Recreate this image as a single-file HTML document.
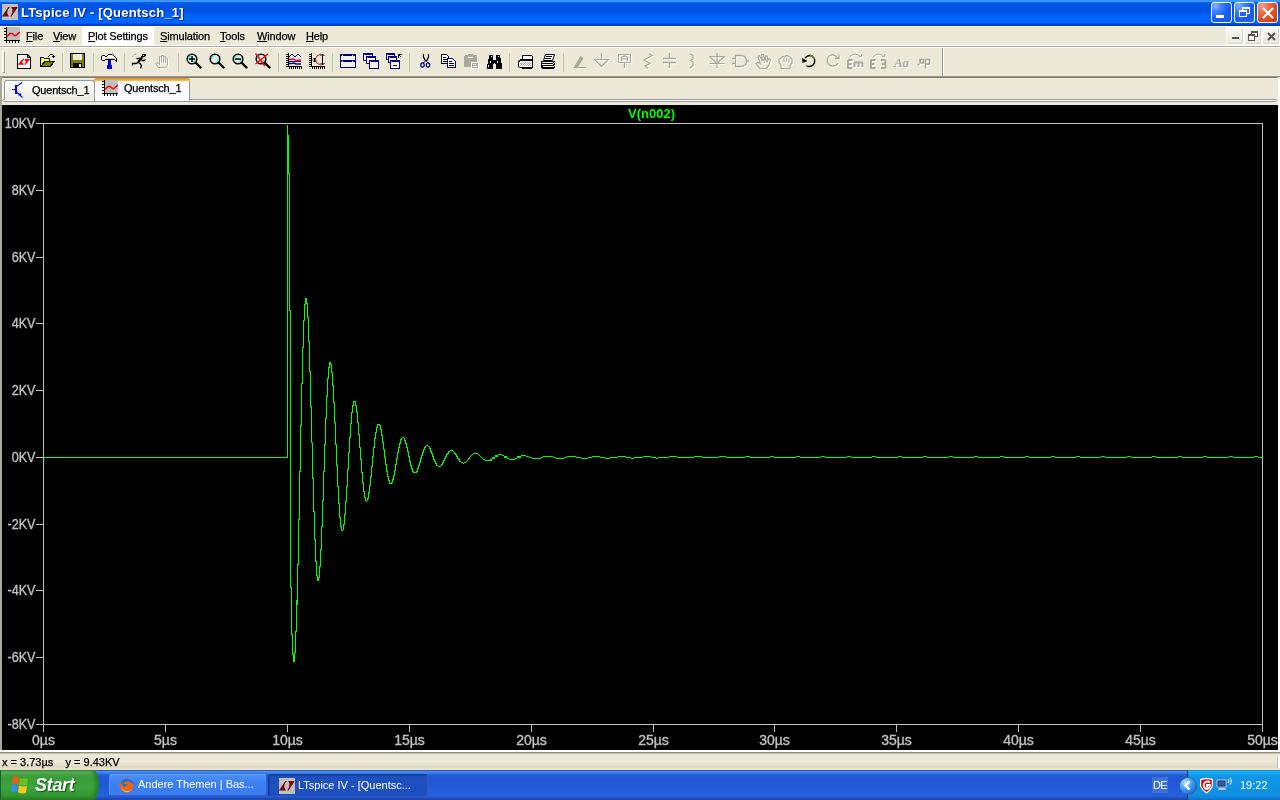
<!DOCTYPE html>
<html><head><meta charset="utf-8">
<style>
*{margin:0;padding:0;box-sizing:border-box}
html,body{width:1280px;height:800px;overflow:hidden;-webkit-font-smoothing:antialiased;background:#ece9d8;font-family:"Liberation Sans",sans-serif;font-size:11px;color:#000}
.abs{position:absolute}
#title,#menubar,#tabbar,#status,#taskbar{will-change:transform}
#menubar,#tabbar,#status{-webkit-text-stroke:0.25px #000}
#title{left:0;top:0;width:1280px;height:26px;background:linear-gradient(#3d95ff 0,#3d95ff 2px,#0a6af8 2px,#005ce6 3px,#0054e3 5px,#0055e5 12px,#005ef0 14px,#0066ff 17px,#0066ff 23px,#0040d0 24px,#0040d0 26px)}
#title .t{left:21px;top:5px;color:#fff;font-weight:bold;font-size:13px;letter-spacing:0.2px;text-shadow:1px 1px 0 #0a1e8c}
#menubar{left:0;top:26px;width:1280px;height:20px;background:#ece9d8;border-top:1px solid #fff8e0;box-shadow:inset 0 -1px 0 #fff}
.mi{position:absolute;top:3px;font-size:11px;letter-spacing:-0.15px}
.mi u{text-decoration:underline;text-underline-offset:1px;text-decoration-thickness:1px}
#toolbar{left:0;top:46px;width:1280px;height:31px;background:#ece9d8;border-top:1px solid #aca899;box-shadow:inset 0 1px 0 #fff}
#tabbar{left:0;top:77px;width:1280px;height:28px;background:#ece9d8}
#plot{left:2px;top:105px;width:1276px;height:645px;background:#000}
#status{left:0;top:750px;width:1280px;height:20px;background:linear-gradient(#fff 0,#fff 2px,#8e8b7c 2px,#8e8b7c 3px,#c8c4b4 3px,#c8c4b4 4px,#ece9d8 4px,#ece9d8 12px,#dcd8c4 17px,#e8e2c8 18px,#ece6cc 20px)}
#taskbar{left:0;top:770px;width:1280px;height:30px;background:linear-gradient(#2a5ad0 0,#2a5ad0 1px,#3c84e4 1px,#4a92e6 2px,#3a80e0 3px,#2a6ad8 4px,#2258d4 6px,#2056d4 10px,#245fdc 26px,#1e48b0 29px,#1e48b0 30px)}
.mdib{top:1px;width:16px;height:16px;background:linear-gradient(#f6f5f0,#ebe9e0);border-right:1px solid #d8d4c6;border-bottom:1px solid #d8d4c6}
.cb{position:absolute;top:2px;width:21px;height:21px;border:1px solid #fff;border-radius:3px;background:radial-gradient(circle at 20% 15%,#8cb4ff 0,#3c82ff 25%,#1a5bf0 60%,#2160ea 100%)}
.cb.x{background:radial-gradient(circle at 20% 15%,#f0a090 0,#e6704a 30%,#d8491c 70%,#c63c10 100%)}
</style></head><body>
<div id="title" class="abs">
 <svg class="abs" style="left:2px;top:4px" width="16" height="16" viewBox="0 0 16 16"><rect width="16" height="16" fill="#c0c0c0"/><path d="M0 12.5L6.3 3H7.9L5.6 6L5.2 9.3L6.9 12.5Z" fill="#800000"/><path d="M9.1 3H15.8L9.5 12.5H8.2L10.3 8.8L10.4 5.2Z" fill="#800000"/></svg>
 <div class="abs t">LTspice IV - [Quentsch_1]</div>
 <div class="cb" style="left:1211px"><div class="abs" style="left:4px;top:12px;width:8px;height:3px;background:#fff"></div></div>
 <div class="cb" style="left:1234px"><div class="abs" style="left:7px;top:4px;width:8px;height:7px;border:1px solid #fff;border-top-width:2px"></div><div class="abs" style="left:4px;top:7px;width:8px;height:7px;border:1px solid #fff;border-top-width:2px;background:#2563f0"></div></div>
 <div class="cb x" style="left:1257px"><svg class="abs" style="left:4px;top:4px" width="12" height="12" viewBox="0 0 12 12"><path d="M1 1L11 11M11 1L1 11" stroke="#fff" stroke-width="2"/></svg></div>
</div>
<div id="menubar" class="abs">
 <svg class="abs" style="left:4px;top:0px" width="17" height="17" viewBox="0 0 17 17" shape-rendering="crispEdges"><rect x="3" y="0" width="13" height="13" fill="#c0c0c0"/><rect x="2" y="0" width="1" height="16" fill="#000"/><rect x="0" y="13" width="16" height="1" fill="#000"/><path d="M0 1h2v1h-2zM0 4h2v1h-2zM0 7h2v1h-2zM0 10h2v1h-2zM2 14h1v2h-1zM5 14h1v2h-1zM8 14h1v2h-1zM11 14h1v2h-1zM14 14h1v2h-1z" fill="#000"/><path d="M3 9.5L6 6.5H8L10.5 8.5H12L15.8 5" stroke="#f00" stroke-width="1.6" fill="none" shape-rendering="auto"/></svg>
 <div class="abs" style="left:1226px;top:0;width:54px;height:19px;background:#fff"></div>
 <div class="abs mdib" style="left:1227px"><div class="abs" style="left:5px;top:9px;width:7px;height:2px;background:#555"></div></div>
 <div class="abs mdib" style="left:1245px"><div class="abs" style="left:6px;top:3px;width:7px;height:6px;border:1px solid #555;border-top-width:2px"></div><div class="abs" style="left:3px;top:6px;width:7px;height:7px;border:1px solid #555;border-top-width:2px;background:#f2f1ea"></div></div>
 <div class="abs mdib" style="left:1263px"><svg class="abs" style="left:4px;top:4px" width="9" height="9" viewBox="0 0 9 9"><path d="M1 1L8 8M8 1L1 8" stroke="#555" stroke-width="2"/></svg></div>
 <div class="mi" style="left:26px"><u>F</u>ile</div>
 <div class="mi" style="left:53px"><u>V</u>iew</div>
 <div class="abs" style="left:82px;top:-1px;width:72px;height:19px;background:#fff"></div>
 <div class="mi" style="left:88px"><u>P</u>lot Settings</div>
 <div class="mi" style="left:160px"><u>S</u>imulation</div>
 <div class="mi" style="left:220px"><u>T</u>ools</div>
 <div class="mi" style="left:257px"><u>W</u>indow</div>
 <div class="mi" style="left:306px"><u>H</u>elp</div>
</div>
<div id="toolbar" class="abs"></div>
<div class="abs" style="left:2px;top:51px;width:3px;height:22px;border:1px solid #fff;border-right-color:#aca899;border-bottom-color:#aca899;background:#ece9d8"></div><div class="abs" style="left:62px;top:53px;width:1px;height:19px;background:#c5c2b2"></div><div class="abs" style="left:93px;top:53px;width:1px;height:19px;background:#c5c2b2"></div><div class="abs" style="left:124px;top:53px;width:1px;height:19px;background:#c5c2b2"></div><div class="abs" style="left:178px;top:53px;width:1px;height:19px;background:#c5c2b2"></div><div class="abs" style="left:278px;top:53px;width:1px;height:19px;background:#c5c2b2"></div><div class="abs" style="left:332px;top:53px;width:1px;height:19px;background:#c5c2b2"></div><div class="abs" style="left:409px;top:53px;width:1px;height:19px;background:#c5c2b2"></div><div class="abs" style="left:509px;top:53px;width:1px;height:19px;background:#c5c2b2"></div><div class="abs" style="left:563px;top:53px;width:1px;height:19px;background:#c5c2b2"></div><div class="abs" style="left:942px;top:48px;width:2px;height:28px;border-left:1px solid #9d9a8a;border-right:1px solid #fff"></div><div class="abs" style="left:0;top:76px;width:1280px;height:1px;background:#9d9a8a"></div><svg class="abs" style="left:16px;top:53px" width="16" height="16" viewBox="0 0 16 16" ><path d="M1.5 1.5H11.5L14.5 4.5V15.5H1.5Z" fill="#fff" stroke="#000" stroke-width="1.1"/><path d="M11.5 1.5V4.5H14.5" fill="none" stroke="#000"/><path d="M2 11.8L4.2 8.5L5.5 7L7 6H14.3L12.3 8.2L11.2 9.8L9.4 11.8Z" fill="#f00"/><ellipse cx="8" cy="8.9" rx="1.7" ry="1.7" fill="#fff"/><rect x="7.6" y="10.4" width="0.9" height="1.4" fill="#fff"/><rect x="8.2" y="6" width="0.8" height="1.2" fill="#fff"/></svg><svg class="abs" style="left:39px;top:53px" width="16" height="16" viewBox="0 0 16 16" ><g shape-rendering="crispEdges"><path d="M1 4h4v1h6v3h-6l-3 6h-1z" fill="#000"/><rect x="2" y="5" width="3" height="8" fill="#ff0"/><rect x="5" y="6" width="5" height="2" fill="#ff0"/><path d="M3 6h1v1h-1zM2 8h1v1h-1zM4 8h1v1h-1zM3 10h1v1h-1zM6 6h1v1h-1zM8 6h1v1h-1zM2 12h1v1h-1z" fill="#fff"/><path d="M5 8h11l-4 6h-11z" fill="#000"/><path d="M6 9h8l-3 4h-8z" fill="#808000"/><path d="M9 3h1v-1h1v-1h3v1h1v1h-1v-1h-3v1h-1v1h-1z" fill="#000"/><path d="M13 3h3v1h-1v1h-1v-1h-1z" fill="#000"/></g></svg><svg class="abs" style="left:70px;top:53px" width="16" height="16" viewBox="0 0 16 16" ><rect x="0.5" y="0.5" width="14" height="14" fill="#808000" stroke="#000"/><rect x="3" y="1" width="9" height="6" fill="#ece9d8"/><rect x="3" y="10" width="9" height="5" fill="#000"/><rect x="9" y="11" width="2" height="3" fill="#ece9d8"/></svg><svg class="abs" style="left:101px;top:53px" width="16" height="16" viewBox="0 0 16 16" shape-rendering="crispEdges"><path d="M0.5 3.5L1.5 2.5H3.5L4.5 3.5H5.5L7.5 1.5H11.5L15.5 5.5V8.5L13.5 6.5H4.5L3.5 7.5H1.5L0.5 6.5Z" fill="#fff" stroke="#000"/><rect x="5" y="5" width="8" height="1" fill="#c8c4b0"/><rect x="7" y="7" width="3" height="5" fill="#0000ff"/><rect x="7" y="7" width="1" height="5" fill="#0000a0"/><rect x="6" y="12" width="5" height="4" fill="#0000ff"/><rect x="6" y="12" width="2" height="4" fill="#0000a0"/></svg><svg class="abs" style="left:131px;top:53px" width="16" height="16" viewBox="0 0 16 16" ><path d="M11 1h4v2h-1v1h-3z" fill="#000"/><rect x="12" y="2" width="1" height="1" fill="#fff"/><path d="M11.5 3.5L6.8 9.8" stroke="#000" stroke-width="2.2" fill="none"/><path d="M5.5 5.5H8.5L10 7M10.5 7.5H13L14.5 6.5M7 9.5L5 10.5H1.5V12.5M8.5 10L10.5 12.5L9.5 15.5" stroke="#000" stroke-width="1.3" fill="none"/><path d="M1 3.5L3 3M3 1.5L5.5 1" stroke="#b0ac98"/></svg><svg class="abs" style="left:154px;top:53px" width="16" height="16" viewBox="0 0 16 16" ><g transform="translate(1,1)" stroke="#fff" fill="none"><path d="M4.5 14.5L1.5 10.5L3 9.5L5.5 11.5V3.5H7.5V9.5V2.5H9.5V9.5V3.5H11.5V9.5V5.5H13.5V12.5L11.5 14.5Z"/></g><g stroke="#aca899" fill="none"><path d="M4.5 14.5L1.5 10.5L3 9.5L5.5 11.5V3.5H7.5V9.5V2.5H9.5V9.5V3.5H11.5V9.5V5.5H13.5V12.5L11.5 14.5Z"/></g></svg><svg class="abs" style="left:186px;top:53px" width="16" height="16" viewBox="0 0 16 16" ><circle cx="6" cy="6" r="4.8" fill="none" stroke="#000" stroke-width="1.5"/><path d="M2.8 6Q2.8 3.2 5 2.8" stroke="#0ff" fill="none" stroke-width="1.1"/><path d="M9.2 6Q9.2 8.6 7 9.2" stroke="#0ff" fill="none" stroke-width="1.1"/><path d="M10 10L14.5 14.5" stroke="#000" stroke-width="2.4" stroke-linecap="round"/><path d="M5.3 3h1.5v6h-1.5zM3 5.3h6v1.5h-6z" fill="#000"/></svg><svg class="abs" style="left:209px;top:53px" width="16" height="16" viewBox="0 0 16 16" ><circle cx="6" cy="6" r="4.8" fill="none" stroke="#000" stroke-width="1.5"/><path d="M2.8 6Q2.8 3.2 5 2.8" stroke="#0ff" fill="none" stroke-width="1.1"/><path d="M9.2 6Q9.2 8.6 7 9.2" stroke="#0ff" fill="none" stroke-width="1.1"/><path d="M10 10L14.5 14.5" stroke="#000" stroke-width="2.4" stroke-linecap="round"/></svg><svg class="abs" style="left:232px;top:53px" width="16" height="16" viewBox="0 0 16 16" ><circle cx="6" cy="6" r="4.8" fill="none" stroke="#000" stroke-width="1.5"/><path d="M2.8 6Q2.8 3.2 5 2.8" stroke="#0ff" fill="none" stroke-width="1.1"/><path d="M9.2 6Q9.2 8.6 7 9.2" stroke="#0ff" fill="none" stroke-width="1.1"/><path d="M10 10L14.5 14.5" stroke="#000" stroke-width="2.4" stroke-linecap="round"/><path d="M3 5.3h6v1.5h-6z" fill="#000"/></svg><svg class="abs" style="left:255px;top:53px" width="16" height="16" viewBox="0 0 16 16" ><circle cx="6" cy="6" r="4.8" fill="none" stroke="#000" stroke-width="1.5"/><path d="M2.8 6Q2.8 3.2 5 2.8" stroke="#0ff" fill="none" stroke-width="1.1"/><path d="M9.2 6Q9.2 8.6 7 9.2" stroke="#0ff" fill="none" stroke-width="1.1"/><path d="M10 10L14.5 14.5" stroke="#000" stroke-width="2.4" stroke-linecap="round"/><path d="M0.5 0.5L10 13M13 1L0.5 11" stroke="#f00" stroke-width="1.4"/></svg><svg class="abs" style="left:286px;top:53px" width="16" height="16" viewBox="0 0 16 16" ><path d="M2 0h1v14h-1zM2 13h14v1h-14zM0 1h2v1h-2zM0 3h2v1h-2zM0 5h2v1h-2zM0 7h2v1h-2zM0 9h2v1h-2zM0 11h2v1h-2zM0 13h2v1h-2zM3 14h1v2h-1zM5 14h1v2h-1zM7 14h1v2h-1zM9 14h1v2h-1zM11 14h1v2h-1zM13 14h1v2h-1zM15 14h1v2h-1z" fill="#000" shape-rendering="crispEdges"/><path d="M3 4L6 1L9 4L12 1L15 4" stroke="#0000a0" fill="none"/><path d="M3 6.5H5L7 6L10 7.5L15 7" stroke="#f00" fill="none" stroke-width="1.3"/><path d="M3 8.5H15" stroke="#0000a0" fill="none"/><path d="M3 10.5H6L8 10L10 11H15" stroke="#0000a0" fill="none" stroke-width="1.5"/></svg><svg class="abs" style="left:309px;top:53px" width="16" height="16" viewBox="0 0 16 16" ><path d="M2 0h1v14h-1zM2 13h14v1h-14zM0 1h2v1h-2zM0 3h2v1h-2zM0 5h2v1h-2zM0 7h2v1h-2zM0 9h2v1h-2zM0 11h2v1h-2zM0 13h2v1h-2zM3 14h1v2h-1zM5 14h1v2h-1zM7 14h1v2h-1zM9 14h1v2h-1zM11 14h1v2h-1zM13 14h1v2h-1zM15 14h1v2h-1z" fill="#000" shape-rendering="crispEdges"/><path d="M12 1Q7 2 6 6.5Q7 11 12 12" stroke="#f00" fill="none"/><path d="M13.5 1V12M11.5 3L13.5 1L15.5 3M11.5 10L13.5 12L15.5 10M5.5 5V9M4 6.5L5.5 5L7 6.5M4 7.5L5.5 9L7 7.5" stroke="#000" fill="none"/></svg><svg class="abs" style="left:340px;top:53px" width="16" height="16" viewBox="0 0 16 16" shape-rendering="crispEdges"><rect x="0.5" y="1.5" width="15" height="13" fill="#f4f2e8" stroke="#000080"/><rect x="1" y="1" width="14" height="2" fill="#000080"/><rect x="1" y="7" width="14" height="2" fill="#000080"/><path d="M2 2h1v1h-1zM12 2h1v1h-1zM2 8h1v1h-1zM12 8h1v1h-1z" fill="#fff"/></svg><svg class="abs" style="left:363px;top:53px" width="16" height="16" viewBox="0 0 16 16" shape-rendering="crispEdges"><rect x="0.5" y="0.5" width="9" height="7" fill="#f4f2e8" stroke="#000080"/><rect x="0" y="0" width="10" height="2" fill="#000080"/><rect x="1" y="1" width="1" height="1" fill="#f0f"/><rect x="3.5" y="3.5" width="9" height="7" fill="#f4f2e8" stroke="#000080"/><rect x="3" y="3" width="10" height="2" fill="#000080"/><rect x="4" y="4" width="1" height="1" fill="#f0f"/><rect x="6.5" y="7.5" width="9" height="8" fill="#f4f2e8" stroke="#000080"/><rect x="6" y="7" width="10" height="2" fill="#000080"/><rect x="7" y="8" width="1" height="1" fill="#f0f"/></svg><svg class="abs" style="left:386px;top:53px" width="16" height="16" viewBox="0 0 16 16" shape-rendering="crispEdges"><rect x="0.5" y="0.5" width="8" height="6" fill="#f4f2e8" stroke="#000080"/><rect x="0" y="0" width="9" height="2" fill="#000080"/><rect x="1" y="1" width="1" height="1" fill="#f0f"/><rect x="2.5" y="3.5" width="8" height="6" fill="#f4f2e8" stroke="#000080"/><rect x="2" y="3" width="9" height="2" fill="#000080"/><rect x="3" y="4" width="1" height="1" fill="#f0f"/><rect x="4.5" y="7.5" width="9" height="8" fill="#f4f2e8" stroke="#000080"/><rect x="4" y="7" width="10" height="2" fill="#000080"/><rect x="5" y="8" width="1" height="1" fill="#f0f"/><rect x="7" y="12" width="4" height="1" fill="#000"/><path d="M12.5 1.5h3M12.5 1.5v3M12.5 1.5l3 3" stroke="#000" fill="none"/></svg><svg class="abs" style="left:417px;top:53px" width="16" height="16" viewBox="0 0 16 16" ><path d="M6.5 1V4L8.5 8M11.5 1V4L9.5 8" stroke="#000" fill="none" stroke-width="1.2"/><path d="M8.5 8L6.5 10M9.5 8L11 10" stroke="#000080" fill="none"/><ellipse cx="5.5" cy="12" rx="1.7" ry="2.2" fill="none" stroke="#000080" stroke-width="1.2"/><ellipse cx="11" cy="12" rx="1.7" ry="2.2" fill="none" stroke="#000080" stroke-width="1.2"/></svg><svg class="abs" style="left:440px;top:53px" width="16" height="16" viewBox="0 0 16 16" shape-rendering="crispEdges"><path d="M1.5 1.5H6.5L8.5 3.5V10.5H1.5Z" fill="#fff" stroke="#000" stroke-width="1.2"/><path d="M3 4h3v1h-3zM3 6h4v1h-4zM3 8h4v1h-4z" fill="#000"/><path d="M7.5 5.5H12.5L15.5 8.5V14.5H7.5Z" fill="#fff" stroke="#000080" stroke-width="1.3"/><path d="M9 8h3v1h-3zM9 10h5v1h-5zM9 12h5v1h-5z" fill="#000"/></svg><svg class="abs" style="left:463px;top:53px" width="16" height="16" viewBox="0 0 16 16" shape-rendering="crispEdges"><rect x="1" y="2" width="13" height="12" rx="2" fill="#aca899"/><rect x="5" y="1" width="5" height="2" fill="#aca899"/><rect x="5" y="4" width="5" height="1" fill="#fff"/><rect x="8.5" y="9.5" width="7" height="6" fill="#aca899" stroke="#fff"/><path d="M10 11h3v1h-3zM10 13h4v1h-4z" fill="#fff"/></svg><svg class="abs" style="left:486px;top:53px" width="16" height="16" viewBox="0 0 16 16" shape-rendering="crispEdges"><path d="M3 2h4v5h3v-5h4v3l1 1v4l1 1v5h-6v-5h-1v-1h-1v1h-1v5h-6v-5l1-1v-4l1-1z" fill="#000"/><path d="M5 3h1v1h-1zM12 3h1v1h-1zM4 8h1v2h-1zM11 8h1v2h-1zM2 12h1v2h-1zM9 12h1v2h-1z" fill="#fff"/></svg><svg class="abs" style="left:517px;top:53px" width="16" height="16" viewBox="0 0 16 16" shape-rendering="crispEdges"><path d="M5 2h10v1h1v4h-1v-4h-10z" fill="#000"/><rect x="5" y="2" width="1" height="5" fill="#000"/><rect x="6" y="3" width="9" height="3" fill="#fff"/><path d="M1 8l2-2h13v9h-14v-1h-1z" fill="#000"/><rect x="2" y="8" width="13" height="6" fill="#fff"/><path d="M4 9h1v1h-1zM6 9h1v1h-1zM8 9h1v1h-1zM10 9h1v1h-1zM12 9h1v1h-1zM3 10h1v1h-1zM5 10h1v1h-1zM7 10h1v1h-1zM9 10h1v1h-1zM11 10h1v1h-1zM13 10h1v1h-1zM4 11h1v1h-1zM6 11h1v1h-1zM8 11h1v1h-1zM10 11h1v1h-1zM12 11h1v1h-1zM3 12h1v1h-1zM5 12h1v1h-1zM7 12h1v1h-1zM9 12h1v1h-1zM11 12h1v1h-1zM13 12h1v1h-1z" fill="#aca899"/><rect x="2" y="8" width="1" height="1" fill="#000"/><rect x="5" y="15" width="10" height="1" fill="#000"/></svg><svg class="abs" style="left:540px;top:53px" width="16" height="16" viewBox="0 0 16 16" ><path d="M5.5 1.5H14.5L12.5 7.5H3.5Z" fill="#fff" stroke="#000"/><g shape-rendering="crispEdges"><rect x="6" y="3" width="6" height="1" fill="#000"/><rect x="5" y="5" width="6" height="1" fill="#000"/><path d="M1 8h14v7h-1v1h-12v-1h-1z" fill="#000"/><rect x="2" y="9" width="11" height="1" fill="#fff"/><rect x="2" y="11" width="11" height="1" fill="#fff"/><rect x="7" y="11" width="3" height="1" fill="#ff0"/><rect x="3" y="13" width="10" height="1" fill="#fff"/><path d="M14 9h1v1h-1zM13 10h1v1h-1zM14 12h1v1h-1zM13 13h1v1h-1z" fill="#fff"/></g></svg><svg class="abs" style="left:572px;top:53px" width="17" height="16" viewBox="0 0 17 16" ><g transform="translate(1,1)" stroke="#fff" fill="none"><path d="M1.5 14.5H14.5" stroke-width="1.2"/><path d="M2 14L8.5 3L10.5 4.2L4 14.5Z" fill="#aca899" stroke="none"/></g><g stroke="#aca899" fill="none"><path d="M1.5 14.5H14.5" stroke-width="1.2"/><path d="M2 14L8.5 3L10.5 4.2L4 14.5Z" fill="#aca899" stroke="none"/></g></svg><svg class="abs" style="left:594px;top:53px" width="17" height="16" viewBox="0 0 17 16" ><g transform="translate(1,1)" stroke="#fff" fill="none"><path d="M7.5 0V6.5M0.5 6.5H14.5L7.5 13.5Z" stroke-width="1.2"/></g><g stroke="#aca899" fill="none"><path d="M7.5 0V6.5M0.5 6.5H14.5L7.5 13.5Z" stroke-width="1.2"/></g></svg><svg class="abs" style="left:617px;top:53px" width="17" height="16" viewBox="0 0 17 16" ><g transform="translate(1,1)" stroke="#fff" fill="none"><path d="M1.5 1.5H13.5V9.5H1.5ZM7.5 9.5V15M4.5 8V4.5Q7.5 1.5 10.5 4.5V8M4.5 6H10.5" stroke-width="1.2"/></g><g stroke="#aca899" fill="none"><path d="M1.5 1.5H13.5V9.5H1.5ZM7.5 9.5V15M4.5 8V4.5Q7.5 1.5 10.5 4.5V8M4.5 6H10.5" stroke-width="1.2"/></g></svg><svg class="abs" style="left:640px;top:53px" width="17" height="16" viewBox="0 0 17 16" ><g transform="translate(1,1)" stroke="#fff" fill="none"><path d="M9 0.5L12 2.5L4 7L10 10.5L5 13L8 15.5" stroke-width="1.2"/></g><g stroke="#aca899" fill="none"><path d="M9 0.5L12 2.5L4 7L10 10.5L5 13L8 15.5" stroke-width="1.2"/></g></svg><svg class="abs" style="left:662px;top:53px" width="17" height="16" viewBox="0 0 17 16" ><g transform="translate(1,1)" stroke="#fff" fill="none"><path d="M7.5 0V5.5M1 5.5H14M1 9.5H14M7.5 9.5V15" stroke-width="1.5"/></g><g stroke="#aca899" fill="none"><path d="M7.5 0V5.5M1 5.5H14M1 9.5H14M7.5 9.5V15" stroke-width="1.5"/></g></svg><svg class="abs" style="left:687px;top:53px" width="17" height="16" viewBox="0 0 17 16" ><g transform="translate(1,1)" stroke="#fff" fill="none"><path d="M3 1L6 2.5V6L3.5 7.5L6 9V12.5L3 15" stroke-width="1.3"/></g><g stroke="#aca899" fill="none"><path d="M3 1L6 2.5V6L3.5 7.5L6 9V12.5L3 15" stroke-width="1.3"/></g></svg><svg class="abs" style="left:709px;top:53px" width="17" height="16" viewBox="0 0 17 16" ><g transform="translate(1,1)" stroke="#fff" fill="none"><path d="M0.5 3.5H15.5L8 10.5ZM0.5 10.5H15.5M8 0V15" stroke-width="1.2"/></g><g stroke="#aca899" fill="none"><path d="M0.5 3.5H15.5L8 10.5ZM0.5 10.5H15.5M8 0V15" stroke-width="1.2"/></g></svg><svg class="abs" style="left:732px;top:53px" width="17" height="16" viewBox="0 0 17 16" ><g transform="translate(1,1)" stroke="#fff" fill="none"><path d="M3.5 2.5H8.5Q14.5 2.5 14.5 8Q14.5 13.5 8.5 13.5H3.5ZM0 5.5H3.5M0 10.5H3.5M14.5 8H17" stroke-width="1.3"/></g><g stroke="#aca899" fill="none"><path d="M3.5 2.5H8.5Q14.5 2.5 14.5 8Q14.5 13.5 8.5 13.5H3.5ZM0 5.5H3.5M0 10.5H3.5M14.5 8H17" stroke-width="1.3"/></g></svg><svg class="abs" style="left:755px;top:53px" width="17" height="16" viewBox="0 0 17 16" ><g transform="translate(1,1)" stroke="#fff" fill="none"><path d="M1 10.5L3 9.5L5.5 11L3 3.5L4.5 2.5L7.5 8L6.5 2L8.5 1.5L10 7.5L10.5 3L12.5 3L12.5 8L14 5.5L15.5 6.5L14 12L11 15.5H5Z" stroke-width="1.2"/><path d="M8 6l2 4M10.5 6l1 3" stroke-width="1"/></g><g stroke="#aca899" fill="none"><path d="M1 10.5L3 9.5L5.5 11L3 3.5L4.5 2.5L7.5 8L6.5 2L8.5 1.5L10 7.5L10.5 3L12.5 3L12.5 8L14 5.5L15.5 6.5L14 12L11 15.5H5Z" stroke-width="1.2"/><path d="M8 6l2 4M10.5 6l1 3" stroke-width="1"/></g></svg><svg class="abs" style="left:778px;top:53px" width="17" height="16" viewBox="0 0 17 16" ><g transform="translate(1,1)" stroke="#fff" fill="none"><path d="M3 15.5V12L1 9V6L3 5L4.5 3.5L6.5 4L8 2.5L10 3L12 4L14 6V10L12 12.5V15.5Z" stroke-width="1.2"/><path d="M6 5V9M8.5 4.5V8.5M11 5.5V9" stroke-width="1"/></g><g stroke="#aca899" fill="none"><path d="M3 15.5V12L1 9V6L3 5L4.5 3.5L6.5 4L8 2.5L10 3L12 4L14 6V10L12 12.5V15.5Z" stroke-width="1.2"/><path d="M6 5V9M8.5 4.5V8.5M11 5.5V9" stroke-width="1"/></g></svg><svg class="abs" style="left:825px;top:53px" width="17" height="16" viewBox="0 0 17 16" ><g transform="translate(1,1)" stroke="#fff" fill="none"><path d="M12.5 5Q10 1 6 2Q1.5 4 2.5 9Q4 13.5 8.5 13Q12 12.5 13 10" stroke-width="1.3"/><path d="M10 5.5H14V1.5" stroke-width="1.3"/></g><g stroke="#aca899" fill="none"><path d="M12.5 5Q10 1 6 2Q1.5 4 2.5 9Q4 13.5 8.5 13Q12 12.5 13 10" stroke-width="1.3"/><path d="M10 5.5H14V1.5" stroke-width="1.3"/></g></svg><svg class="abs" style="left:847px;top:53px" width="17" height="16" viewBox="0 0 17 16" ><g transform="translate(1,1)" stroke="#fff" fill="none"><path d="M2.5 4Q8 -2 14 4" stroke-width="1"/><path d="M12 3.5H14.5V1" stroke-width="1"/><path d="M1 7H5.5M1 7V15.5M1 11H4.5M1 15H5.5M7 9.5H16M7.5 9.5V14M11.5 9.5V14M15.5 9.5V14" stroke-width="2"/></g><g stroke="#aca899" fill="none"><path d="M2.5 4Q8 -2 14 4" stroke-width="1"/><path d="M12 3.5H14.5V1" stroke-width="1"/><path d="M1 7H5.5M1 7V15.5M1 11H4.5M1 15H5.5M7 9.5H16M7.5 9.5V14M11.5 9.5V14M15.5 9.5V14" stroke-width="2"/></g></svg><svg class="abs" style="left:870px;top:53px" width="17" height="16" viewBox="0 0 17 16" ><g transform="translate(1,1)" stroke="#fff" fill="none"><path d="M3 4Q8 -2 14 4" stroke-width="1"/><path d="M12 3.5H14.5V1" stroke-width="1"/><path d="M1 7H5.5M1 7V15.5M1 11H4.5M1 15H5.5M11 7H15.5M15.5 7V15.5M12 11H15.5M11 15H15.5" stroke-width="2"/></g><g stroke="#aca899" fill="none"><path d="M3 4Q8 -2 14 4" stroke-width="1"/><path d="M12 3.5H14.5V1" stroke-width="1"/><path d="M1 7H5.5M1 7V15.5M1 11H4.5M1 15H5.5M11 7H15.5M15.5 7V15.5M12 11H15.5M11 15H15.5" stroke-width="2"/></g></svg><svg class="abs" style="left:917px;top:53px" width="17" height="16" viewBox="0 0 17 16" ><g transform="translate(1,1)" stroke="#fff" fill="none"><path d="M1 11h1v1h-1z" stroke-width="0.8"/><path d="M3 6.5H6.5V10H3ZM8 6.5H12.5V11H9M8.5 6.5V15.5" stroke-width="1.6"/></g><g stroke="#aca899" fill="none"><path d="M1 11h1v1h-1z" stroke-width="0.8"/><path d="M3 6.5H6.5V10H3ZM8 6.5H12.5V11H9M8.5 6.5V15.5" stroke-width="1.6"/></g></svg><svg class="abs" style="left:893px;top:53px" width="17" height="16" viewBox="0 0 17 16" ><text x="9.5" y="14.5" font-family="Liberation Serif" font-style="italic" font-weight="bold" font-size="13" fill="#fff" text-anchor="middle">Aa</text><text x="8.5" y="13.5" font-family="Liberation Serif" font-style="italic" font-weight="bold" font-size="13" fill="#aca899" text-anchor="middle">Aa</text></svg><svg class="abs" style="left:801px;top:53px" width="16" height="16" viewBox="0 0 16 16" ><path d="M4 5Q7.5 1.5 11 3Q14.5 5.5 13.5 9.5Q12 13.5 8 13.5Q6 13.3 5.5 12.5" stroke="#000" stroke-width="1.4" fill="none"/><path d="M9 2.2Q12 3 13.2 6" stroke="#8a8a00" stroke-width="1.2" fill="none"/><path d="M1 5L1.5 10L6.5 8Z" fill="#000"/></svg>
<div id="tabbar" class="abs">
 <div class="abs" style="left:0;top:0;width:1280px;height:1px;background:#7f7c6f"></div>
 <div class="abs" style="left:2px;top:1px;width:1px;height:27px;background:#fbfaf3"></div>
 <div class="abs" style="left:2px;top:22px;width:1275px;height:3px;border:1px solid #919b9c;border-radius:2px;background:#fff"></div>
 <div class="abs" style="left:4px;top:3px;width:91px;height:20px;border:1px solid #919b9c;border-bottom:none;border-radius:3px 3px 0 0;background:linear-gradient(#fff,#f4f3ee 50%,#ebeae2)"></div>
 <div class="abs" style="left:94px;top:1px;width:96px;height:23px;border:1px solid #919b9c;border-top:none;border-bottom:none;border-radius:3px 3px 0 0;background:#fcfcfe"></div>
 <div class="abs" style="left:94px;top:1px;width:96px;height:3px;border-radius:3px 3px 0 0;background:linear-gradient(#e68b2c,#ffc73c)"></div>
 <div class="abs" style="left:32px;top:7px;font-size:11px;letter-spacing:-0.2px">Quentsch_1</div>
 <div class="abs" style="left:124px;top:5px;font-size:11px;letter-spacing:-0.2px">Quentsch_1</div>
 <div class="abs" style="left:95px;top:22px;width:94px;height:2px;background:#fcfcfe"></div>
 <svg class="abs" style="left:12px;top:5px" width="12" height="17" viewBox="0 0 12 17"><rect x="0" y="7" width="3" height="1" fill="#00f"/><rect x="3" y="3" width="2" height="9" fill="#00f"/><path d="M4.5 4.5L10 0.5M4.5 10L10.5 15.5" stroke="#00f" stroke-width="1.1"/><path d="M6.5 13.5L9.5 13L8 10.5Z" fill="#00f"/></svg>
 <svg class="abs" style="left:102px;top:3px" width="17" height="17" viewBox="0 0 17 17" shape-rendering="crispEdges"><rect x="3" y="0" width="13" height="13" fill="#c0c0c0"/><rect x="2" y="0" width="1" height="16" fill="#000"/><rect x="0" y="13" width="16" height="1" fill="#000"/><path d="M0 1h2v1h-2zM0 4h2v1h-2zM0 7h2v1h-2zM0 10h2v1h-2zM2 14h1v2h-1zM5 14h1v2h-1zM8 14h1v2h-1zM11 14h1v2h-1zM14 14h1v2h-1z" fill="#000"/><path d="M3 9.5L6 6.5H8L10.5 8.5H12L15.8 5" stroke="#f00" stroke-width="1.6" fill="none" shape-rendering="auto"/></svg>
</div>
<div id="plot" class="abs"></div>
<div class="abs" style="left:0;top:77px;width:2px;height:673px;background:#aca899"></div>
<div class="abs" style="left:1278px;top:77px;width:2px;height:673px;background:#fff"></div>
<svg class="abs" style="left:0;top:0;will-change:transform" width="1280" height="800" shape-rendering="crispEdges">
 <path d="M43 123h1220v1h-1220zM43 724h1220v1h-1220zM43 123h1v602h-1zM1262 123h1v602h-1z" fill="#c0c0c0"/><path d="M36 123h7v1h-7zM36 190h7v1h-7zM36 257h7v1h-7zM36 323h7v1h-7zM36 390h7v1h-7zM36 457h7v1h-7zM36 524h7v1h-7zM36 590h7v1h-7zM36 657h7v1h-7zM36 724h7v1h-7zM43 724h1v8h-1zM165 724h1v8h-1zM287 724h1v8h-1zM409 724h1v8h-1zM531 724h1v8h-1zM653 724h1v8h-1zM774 724h1v8h-1zM896 724h1v8h-1zM1018 724h1v8h-1zM1140 724h1v8h-1zM1262 724h1v8h-1z" fill="#c0c0c0"/><g fill="#c0c0c0" font-family="Liberation Sans" font-size="14" stroke="#c0c0c0" stroke-width="0.35" shape-rendering="auto"><text transform="translate(35.5 128) scale(0.9 1)" text-anchor="end">10KV</text><text transform="translate(35.5 195) scale(0.9 1)" text-anchor="end">8KV</text><text transform="translate(35.5 262) scale(0.9 1)" text-anchor="end">6KV</text><text transform="translate(35.5 328) scale(0.9 1)" text-anchor="end">4KV</text><text transform="translate(35.5 395) scale(0.9 1)" text-anchor="end">2KV</text><text transform="translate(35.5 462) scale(0.9 1)" text-anchor="end">0KV</text><text transform="translate(35.5 529) scale(0.9 1)" text-anchor="end">-2KV</text><text transform="translate(35.5 595) scale(0.9 1)" text-anchor="end">-4KV</text><text transform="translate(35.5 662) scale(0.9 1)" text-anchor="end">-6KV</text><text transform="translate(35.5 729) scale(0.9 1)" text-anchor="end">-8KV</text><text transform="translate(43.5 745)" text-anchor="middle">0µs</text><text transform="translate(165.5 745)" text-anchor="middle">5µs</text><text transform="translate(287.5 745)" text-anchor="middle">10µs</text><text transform="translate(409.5 745)" text-anchor="middle">15µs</text><text transform="translate(531.5 745)" text-anchor="middle">20µs</text><text transform="translate(653.5 745)" text-anchor="middle">25µs</text><text transform="translate(774.5 745)" text-anchor="middle">30µs</text><text transform="translate(896.5 745)" text-anchor="middle">35µs</text><text transform="translate(1018.5 745)" text-anchor="middle">40µs</text><text transform="translate(1140.5 745)" text-anchor="middle">45µs</text><text transform="translate(1262.5 745)" text-anchor="middle">50µs</text></g><text x="651.5" y="117.5" text-anchor="middle" fill="#00ff00" font-family="Liberation Sans" font-size="13" font-weight="bold">V(n002)</text>
 <path d="M43 457h244v1h-244zM287 125h1v333h-1zM288 135h1v39h-1zM289 173h1v138h-1zM290 310h1v278h-1zM291 587h1v48h-1zM292 634h1v21h-1zM293 654h1v8h-1zM294 652h1v10h-1zM295 631h1v22h-1zM296 600h1v32h-1zM297 564h1v41h-1zM298 519h1v46h-1zM299 471h1v49h-1zM300 425h1v47h-1zM301 383h1v43h-1zM302 347h1v37h-1zM303 320h1v28h-1zM304 304h1v17h-1zM305 298h1v7h-1zM306 298h1v6h-1zM307 303h1v15h-1zM308 317h1v25h-1zM309 341h1v31h-1zM310 371h1v36h-1zM311 406h1v37h-1zM312 442h1v37h-1zM313 478h1v34h-1zM314 511h1v29h-1zM315 539h1v23h-1zM316 561h1v15h-1zM317 575h1v6h-1zM318 577h1v4h-1zM319 566h1v12h-1zM320 549h1v18h-1zM321 526h1v24h-1zM322 500h1v27h-1zM323 471h1v30h-1zM324 444h1v28h-1zM325 418h1v27h-1zM326 396h1v23h-1zM327 378h1v19h-1zM328 367h1v12h-1zM329 362h1v6h-1zM330 362h1v3h-1zM331 364h1v9h-1zM332 372h1v14h-1zM333 385h1v18h-1zM334 402h1v21h-1zM335 422h1v23h-1zM336 444h1v22h-1zM337 465h1v22h-1zM338 486h1v18h-1zM339 503h1v15h-1zM340 517h1v10h-1zM341 526h1v5h-1zM342 530h1v1h-1zM343 524h1v6h-1zM344 514h1v11h-1zM345 501h1v14h-1zM346 486h1v16h-1zM347 469h1v18h-1zM348 452h1v18h-1zM349 437h1v16h-1zM350 423h1v15h-1zM351 412h1v12h-1zM352 405h1v8h-1zM353 401h1v5h-1zM354 401h1v1h-1zM355 401h1v5h-1zM356 405h1v8h-1zM357 412h1v11h-1zM358 422h1v13h-1zM359 434h1v14h-1zM360 447h1v13h-1zM361 459h1v14h-1zM362 472h1v11h-1zM363 482h1v10h-1zM364 491h1v7h-1zM365 497h1v4h-1zM366 501h1v1h-1zM367 498h1v3h-1zM368 492h1v7h-1zM369 485h1v8h-1zM370 476h1v10h-1zM371 466h1v11h-1zM372 456h1v11h-1zM373 447h1v10h-1zM374 438h1v10h-1zM375 432h1v7h-1zM376 427h1v6h-1zM377 424h1v4h-1zM378 424h1v1h-1zM379 424h1v2h-1zM380 425h1v5h-1zM381 429h1v7h-1zM382 435h1v8h-1zM383 442h1v8h-1zM384 449h1v9h-1zM385 457h1v8h-1zM386 464h1v8h-1zM387 471h1v6h-1zM388 476h1v5h-1zM389 480h1v4h-1zM390 483h1v1h-1zM391 482h1v2h-1zM392 479h1v4h-1zM393 475h1v5h-1zM394 470h1v6h-1zM395 464h1v7h-1zM396 458h1v7h-1zM397 452h1v7h-1zM398 447h1v6h-1zM399 443h1v5h-1zM400 439h1v5h-1zM401 438h1v2h-1zM402 437h1v1h-1zM403 437h1v1h-1zM404 438h1v3h-1zM405 440h1v4h-1zM406 443h1v5h-1zM407 447h1v5h-1zM408 451h1v6h-1zM409 456h1v6h-1zM410 461h1v5h-1zM411 465h1v4h-1zM412 468h1v4h-1zM413 471h1v2h-1zM414 472h1v1h-1zM415 472h1v1h-1zM416 471h1v2h-1zM417 468h1v4h-1zM418 465h1v4h-1zM419 462h1v4h-1zM420 458h1v5h-1zM421 455h1v4h-1zM422 452h1v4h-1zM423 449h1v4h-1zM424 447h1v3h-1zM425 446h1v2h-1zM426 445h1v1h-1zM427 445h1v1h-1zM428 446h1v1h-1zM429 447h1v2h-1zM430 448h1v4h-1zM431 451h1v3h-1zM432 453h1v4h-1zM433 456h1v4h-1zM434 459h1v3h-1zM435 461h1v3h-1zM436 463h1v3h-1zM437 465h1v1h-1zM438 466h1v1h-1zM439 466h1v1h-1zM440 466h1v1h-1zM441 464h1v2h-1zM442 462h1v3h-1zM443 460h1v3h-1zM444 458h1v3h-1zM445 456h1v3h-1zM446 454h1v3h-1zM447 453h1v2h-1zM448 451h1v3h-1zM449 451h1v1h-1zM450 450h1v1h-1zM451 450h1v1h-1zM452 450h1v1h-1zM453 451h1v1h-1zM454 452h1v2h-1zM455 453h1v2h-1zM456 454h1v3h-1zM457 456h1v3h-1zM458 458h1v2h-1zM459 459h1v3h-1zM460 461h1v1h-1zM461 462h1v1h-1zM462 462h1v1h-1zM463 463h1v1h-1zM464 462h1v1h-1zM465 462h1v1h-1zM466 461h1v1h-1zM467 460h1v1h-1zM468 458h1v2h-1zM469 457h1v2h-1zM470 456h1v1h-1zM471 455h1v1h-1zM472 454h1v1h-1zM473 453h1v1h-1zM474 453h1v1h-1zM475 453h1v1h-1zM476 453h1v1h-1zM477 453h1v1h-1zM478 454h1v1h-1zM479 455h1v1h-1zM480 456h1v1h-1zM481 457h1v1h-1zM482 458h1v1h-1zM483 459h1v1h-1zM484 459h1v1h-1zM485 460h1v1h-1zM486 460h1v1h-1zM487 460h1v1h-1zM488 460h1v1h-1zM489 460h1v1h-1zM490 459h1v2h-1zM491 459h1v2h-1zM492 457h1v2h-1zM493 457h1v2h-1zM494 457h1v2h-1zM495 455h1v2h-1zM496 455h1v2h-1zM497 455h1v2h-1zM498 454h1v1h-1zM499 454h1v1h-1zM500 454h1v1h-1zM501 454h1v1h-1zM502 455h1v1h-1zM503 455h1v1h-1zM504 456h1v2h-1zM505 456h1v2h-1zM506 456h1v2h-1zM507 458h1v1h-1zM508 458h1v1h-1zM509 459h1v1h-1zM510 459h1v1h-1zM511 459h1v1h-1zM512 459h1v1h-1zM513 459h1v1h-1zM514 459h1v1h-1zM515 458h1v1h-1zM516 458h1v1h-1zM517 456h1v2h-1zM518 456h1v2h-1zM519 456h1v2h-1zM520 456h1v2h-1zM521 455h1v1h-1zM522 455h1v1h-1zM523 455h1v1h-1zM524 455h1v1h-1zM525 455h1v1h-1zM526 456h1v1h-1zM527 456h1v1h-1zM528 456h1v1h-1zM529 457h1v1h-1zM530 457h1v1h-1zM531 457h1v1h-1zM532 458h1v1h-1zM533 458h1v1h-1zM534 458h1v1h-1zM535 458h1v1h-1zM536 458h1v1h-1zM537 458h1v1h-1zM538 458h1v1h-1zM539 458h1v1h-1zM540 458h1v1h-1zM541 457h1v1h-1zM542 457h1v1h-1zM543 456h1v1h-1zM544 456h1v1h-1zM545 456h1v1h-1zM546 456h1v1h-1zM547 456h1v1h-1zM548 456h1v1h-1zM549 456h1v1h-1zM550 456h1v1h-1zM551 456h1v1h-1zM552 456h1v1h-1zM553 457h1v1h-1zM554 457h1v1h-1zM555 457h1v1h-1zM556 458h1v1h-1zM557 458h1v1h-1zM558 458h1v1h-1zM559 458h1v1h-1zM560 458h1v1h-1zM561 458h1v1h-1zM562 458h1v1h-1zM563 458h1v1h-1zM564 457h1v1h-1zM565 457h1v1h-1zM566 457h1v1h-1zM567 456h1v1h-1zM568 456h1v1h-1zM569 456h1v1h-1zM570 456h1v1h-1zM571 456h1v1h-1zM572 456h1v1h-1zM573 456h1v1h-1zM574 456h1v1h-1zM575 456h1v1h-1zM576 457h1v1h-1zM577 457h1v1h-1zM578 457h1v1h-1zM579 457h1v1h-1zM580 457h1v1h-1zM581 458h1v1h-1zM582 458h1v1h-1zM583 458h1v1h-1zM584 458h1v1h-1zM585 458h1v1h-1zM586 458h1v1h-1zM587 458h1v1h-1zM588 457h1v1h-1zM589 457h1v1h-1zM590 457h1v1h-1zM591 457h1v1h-1zM592 456h1v1h-1zM593 456h1v1h-1zM594 456h1v1h-1zM595 456h1v1h-1zM596 456h1v1h-1zM597 456h1v1h-1zM598 456h1v1h-1zM599 456h1v1h-1zM600 457h1v1h-1zM601 457h1v1h-1zM602 457h1v1h-1zM603 457h1v1h-1zM604 457h1v1h-1zM605 458h1v1h-1zM606 458h1v1h-1zM607 458h1v1h-1zM608 458h1v1h-1zM609 458h1v1h-1zM610 457h1v1h-1zM611 457h1v1h-1zM612 457h1v1h-1zM613 457h1v1h-1zM614 457h1v1h-1zM615 457h1v1h-1zM616 457h1v1h-1zM617 457h1v1h-1zM618 456h1v1h-1zM619 456h1v1h-1zM620 456h1v1h-1zM621 456h1v1h-1zM622 456h1v1h-1zM623 456h1v1h-1zM624 456h1v1h-1zM625 456h1v1h-1zM626 457h1v1h-1zM627 457h1v1h-1zM628 457h1v1h-1zM629 457h1v1h-1zM630 457h1v1h-1zM631 458h1v1h-1zM632 458h1v1h-1zM633 458h1v1h-1zM634 457h1v1h-1zM635 457h1v1h-1zM636 457h1v1h-1zM637 457h1v1h-1zM638 457h1v1h-1zM639 457h1v1h-1zM640 457h1v1h-1zM641 457h1v1h-1zM642 457h1v1h-1zM643 456h1v1h-1zM644 456h1v1h-1zM645 456h1v1h-1zM646 456h1v1h-1zM647 456h1v1h-1zM648 456h1v1h-1zM649 456h1v1h-1zM650 456h1v1h-1zM651 457h1v1h-1zM652 457h1v1h-1zM653 457h1v1h-1zM654 457h1v1h-1zM655 457h1v1h-1zM656 458h1v1h-1zM657 458h1v1h-1zM658 457h1v1h-1zM659 457h1v1h-1zM660 457h1v1h-1zM661 457h1v1h-1zM662 457h1v1h-1zM663 457h1v1h-1zM664 457h1v1h-1zM665 457h1v1h-1zM666 457h1v1h-1zM667 457h1v1h-1zM668 457h1v1h-1zM669 456h1v1h-1zM670 456h1v1h-1zM671 456h1v1h-1zM672 456h1v1h-1zM673 456h1v1h-1zM674 456h1v1h-1zM675 456h1v1h-1zM676 456h1v1h-1zM677 457h1v1h-1zM678 457h1v1h-1zM679 457h1v1h-1zM680 457h1v1h-1zM681 457h1v1h-1zM682 457h1v1h-1zM683 457h1v1h-1zM684 457h1v1h-1zM685 457h1v1h-1zM686 457h1v1h-1zM687 457h1v1h-1zM688 457h1v1h-1zM689 457h1v1h-1zM690 457h1v1h-1zM691 457h1v1h-1zM692 457h1v1h-1zM693 457h1v1h-1zM694 456h1v1h-1zM695 456h1v1h-1zM696 456h1v1h-1zM697 456h1v1h-1zM698 456h1v1h-1zM699 456h1v1h-1zM700 456h1v1h-1zM701 456h1v1h-1zM702 457h1v1h-1zM703 457h1v1h-1zM704 457h1v1h-1zM705 457h1v1h-1zM706 457h1v1h-1zM707 457h1v1h-1zM708 457h1v1h-1zM709 457h1v1h-1zM710 457h1v1h-1zM711 457h1v1h-1zM712 457h1v1h-1zM713 457h1v1h-1zM714 457h1v1h-1zM715 457h1v1h-1zM716 457h1v1h-1zM717 457h1v1h-1zM718 457h1v1h-1zM719 456h1v1h-1zM720 456h1v1h-1zM721 456h1v1h-1zM722 456h1v1h-1zM723 456h1v1h-1zM724 456h1v1h-1zM725 456h1v1h-1zM726 457h1v1h-1zM727 457h1v1h-1zM728 457h1v1h-1zM729 457h1v1h-1zM730 457h1v1h-1zM731 457h1v1h-1zM732 457h1v1h-1zM733 457h1v1h-1zM734 457h1v1h-1zM735 457h1v1h-1zM736 457h1v1h-1zM737 457h1v1h-1zM738 457h1v1h-1zM739 457h1v1h-1zM740 457h1v1h-1zM741 457h1v1h-1zM742 457h1v1h-1zM743 457h1v1h-1zM744 457h1v1h-1zM745 456h1v1h-1zM746 456h1v1h-1zM747 456h1v1h-1zM748 456h1v1h-1zM749 456h1v1h-1zM750 457h1v1h-1zM751 457h1v1h-1zM752 457h1v1h-1zM753 457h1v1h-1zM754 457h1v1h-1zM755 457h1v1h-1zM756 457h1v1h-1zM757 457h1v1h-1zM758 457h1v1h-1zM759 457h1v1h-1zM760 457h1v1h-1zM761 457h1v1h-1zM762 457h1v1h-1zM763 457h1v1h-1zM764 457h1v1h-1zM765 457h1v1h-1zM766 457h1v1h-1zM767 457h1v1h-1zM768 457h1v1h-1zM769 457h1v1h-1zM770 456h1v1h-1zM771 456h1v1h-1zM772 456h1v1h-1zM773 456h1v1h-1zM774 457h1v1h-1zM775 457h1v1h-1zM776 457h1v1h-1zM777 457h1v1h-1zM778 457h1v1h-1zM779 457h1v1h-1zM780 457h1v1h-1zM781 457h1v1h-1zM782 457h1v1h-1zM783 457h1v1h-1zM784 457h1v1h-1zM785 457h1v1h-1zM786 457h1v1h-1zM787 457h1v1h-1zM788 457h1v1h-1zM789 457h1v1h-1zM790 457h1v1h-1zM791 457h1v1h-1zM792 457h1v1h-1zM793 457h1v1h-1zM794 457h1v1h-1zM795 457h1v1h-1zM796 456h1v1h-1zM797 456h1v1h-1zM798 456h1v1h-1zM799 456h1v1h-1zM800 457h1v1h-1zM801 457h1v1h-1zM802 457h1v1h-1zM803 457h1v1h-1zM804 457h1v1h-1zM805 457h1v1h-1zM806 457h1v1h-1zM807 457h1v1h-1zM808 457h1v1h-1zM809 457h1v1h-1zM810 457h1v1h-1zM811 457h1v1h-1zM812 457h1v1h-1zM813 457h1v1h-1zM814 457h1v1h-1zM815 457h1v1h-1zM816 457h1v1h-1zM817 457h1v1h-1zM818 457h1v1h-1zM819 457h1v1h-1zM820 457h1v1h-1zM821 456h1v1h-1zM822 456h1v1h-1zM823 456h1v1h-1zM824 456h1v1h-1zM825 457h1v1h-1zM826 457h1v1h-1zM827 457h1v1h-1zM828 457h1v1h-1zM829 457h1v1h-1zM830 457h1v1h-1zM831 457h1v1h-1zM832 457h1v1h-1zM833 457h1v1h-1zM834 457h1v1h-1zM835 457h1v1h-1zM836 457h1v1h-1zM837 457h1v1h-1zM838 457h1v1h-1zM839 457h1v1h-1zM840 457h1v1h-1zM841 457h1v1h-1zM842 457h1v1h-1zM843 457h1v1h-1zM844 457h1v1h-1zM845 457h1v1h-1zM846 457h1v1h-1zM847 456h1v1h-1zM848 456h1v1h-1zM849 456h1v1h-1zM850 456h1v1h-1zM851 457h1v1h-1zM852 457h1v1h-1zM853 457h1v1h-1zM854 457h1v1h-1zM855 457h1v1h-1zM856 457h1v1h-1zM857 457h1v1h-1zM858 457h1v1h-1zM859 457h1v1h-1zM860 457h1v1h-1zM861 457h1v1h-1zM862 457h1v1h-1zM863 457h1v1h-1zM864 457h1v1h-1zM865 457h1v1h-1zM866 457h1v1h-1zM867 457h1v1h-1zM868 457h1v1h-1zM869 457h1v1h-1zM870 457h1v1h-1zM871 457h1v1h-1zM872 456h1v1h-1zM873 456h1v1h-1zM874 456h1v1h-1zM875 456h1v1h-1zM876 457h1v1h-1zM877 457h1v1h-1zM878 457h1v1h-1zM879 457h1v1h-1zM880 457h1v1h-1zM881 457h1v1h-1zM882 457h1v1h-1zM883 457h1v1h-1zM884 457h1v1h-1zM885 457h1v1h-1zM886 457h1v1h-1zM887 457h1v1h-1zM888 457h1v1h-1zM889 457h1v1h-1zM890 457h1v1h-1zM891 457h1v1h-1zM892 457h1v1h-1zM893 457h1v1h-1zM894 457h1v1h-1zM895 457h1v1h-1zM896 457h1v1h-1zM897 457h1v1h-1zM898 456h1v1h-1zM899 456h1v1h-1zM900 456h1v1h-1zM901 456h1v1h-1zM902 457h1v1h-1zM903 457h1v1h-1zM904 457h1v1h-1zM905 457h1v1h-1zM906 457h1v1h-1zM907 457h1v1h-1zM908 457h1v1h-1zM909 457h1v1h-1zM910 457h1v1h-1zM911 457h1v1h-1zM912 457h1v1h-1zM913 457h1v1h-1zM914 457h1v1h-1zM915 457h1v1h-1zM916 457h1v1h-1zM917 457h1v1h-1zM918 457h1v1h-1zM919 457h1v1h-1zM920 457h1v1h-1zM921 457h1v1h-1zM922 457h1v1h-1zM923 456h1v1h-1zM924 456h1v1h-1zM925 456h1v1h-1zM926 456h1v1h-1zM927 457h1v1h-1zM928 457h1v1h-1zM929 457h1v1h-1zM930 457h1v1h-1zM931 457h1v1h-1zM932 457h1v1h-1zM933 457h1v1h-1zM934 457h1v1h-1zM935 457h1v1h-1zM936 457h1v1h-1zM937 457h1v1h-1zM938 457h1v1h-1zM939 457h1v1h-1zM940 457h1v1h-1zM941 457h1v1h-1zM942 457h1v1h-1zM943 457h1v1h-1zM944 457h1v1h-1zM945 457h1v1h-1zM946 457h1v1h-1zM947 457h1v1h-1zM948 457h1v1h-1zM949 456h1v1h-1zM950 456h1v1h-1zM951 456h1v1h-1zM952 456h1v1h-1zM953 457h1v1h-1zM954 457h1v1h-1zM955 457h1v1h-1zM956 457h1v1h-1zM957 457h1v1h-1zM958 457h1v1h-1zM959 457h1v1h-1zM960 457h1v1h-1zM961 457h1v1h-1zM962 457h1v1h-1zM963 457h1v1h-1zM964 457h1v1h-1zM965 457h1v1h-1zM966 457h1v1h-1zM967 457h1v1h-1zM968 457h1v1h-1zM969 457h1v1h-1zM970 457h1v1h-1zM971 457h1v1h-1zM972 457h1v1h-1zM973 457h1v1h-1zM974 456h1v1h-1zM975 456h1v1h-1zM976 456h1v1h-1zM977 456h1v1h-1zM978 457h1v1h-1zM979 457h1v1h-1zM980 457h1v1h-1zM981 457h1v1h-1zM982 457h1v1h-1zM983 457h1v1h-1zM984 457h1v1h-1zM985 457h1v1h-1zM986 457h1v1h-1zM987 457h1v1h-1zM988 457h1v1h-1zM989 457h1v1h-1zM990 457h1v1h-1zM991 457h1v1h-1zM992 457h1v1h-1zM993 457h1v1h-1zM994 457h1v1h-1zM995 457h1v1h-1zM996 457h1v1h-1zM997 457h1v1h-1zM998 457h1v1h-1zM999 457h1v1h-1zM1000 456h1v1h-1zM1001 456h1v1h-1zM1002 456h1v1h-1zM1003 456h1v1h-1zM1004 457h1v1h-1zM1005 457h1v1h-1zM1006 457h1v1h-1zM1007 457h1v1h-1zM1008 457h1v1h-1zM1009 457h1v1h-1zM1010 457h1v1h-1zM1011 457h1v1h-1zM1012 457h1v1h-1zM1013 457h1v1h-1zM1014 457h1v1h-1zM1015 457h1v1h-1zM1016 457h1v1h-1zM1017 457h1v1h-1zM1018 457h1v1h-1zM1019 457h1v1h-1zM1020 457h1v1h-1zM1021 457h1v1h-1zM1022 457h1v1h-1zM1023 457h1v1h-1zM1024 457h1v1h-1zM1025 456h1v1h-1zM1026 456h1v1h-1zM1027 456h1v1h-1zM1028 456h1v1h-1zM1029 457h1v1h-1zM1030 457h1v1h-1zM1031 457h1v1h-1zM1032 457h1v1h-1zM1033 457h1v1h-1zM1034 457h1v1h-1zM1035 457h1v1h-1zM1036 457h1v1h-1zM1037 457h1v1h-1zM1038 457h1v1h-1zM1039 457h1v1h-1zM1040 457h1v1h-1zM1041 457h1v1h-1zM1042 457h1v1h-1zM1043 457h1v1h-1zM1044 457h1v1h-1zM1045 457h1v1h-1zM1046 457h1v1h-1zM1047 457h1v1h-1zM1048 457h1v1h-1zM1049 457h1v1h-1zM1050 457h1v1h-1zM1051 456h1v1h-1zM1052 456h1v1h-1zM1053 456h1v1h-1zM1054 456h1v1h-1zM1055 457h1v1h-1zM1056 457h1v1h-1zM1057 457h1v1h-1zM1058 457h1v1h-1zM1059 457h1v1h-1zM1060 457h1v1h-1zM1061 457h1v1h-1zM1062 457h1v1h-1zM1063 457h1v1h-1zM1064 457h1v1h-1zM1065 457h1v1h-1zM1066 457h1v1h-1zM1067 457h1v1h-1zM1068 457h1v1h-1zM1069 457h1v1h-1zM1070 457h1v1h-1zM1071 457h1v1h-1zM1072 457h1v1h-1zM1073 457h1v1h-1zM1074 457h1v1h-1zM1075 457h1v1h-1zM1076 456h1v1h-1zM1077 456h1v1h-1zM1078 456h1v1h-1zM1079 456h1v1h-1zM1080 457h1v1h-1zM1081 457h1v1h-1zM1082 457h1v1h-1zM1083 457h1v1h-1zM1084 457h1v1h-1zM1085 457h1v1h-1zM1086 457h1v1h-1zM1087 457h1v1h-1zM1088 457h1v1h-1zM1089 457h1v1h-1zM1090 457h1v1h-1zM1091 457h1v1h-1zM1092 457h1v1h-1zM1093 457h1v1h-1zM1094 457h1v1h-1zM1095 457h1v1h-1zM1096 457h1v1h-1zM1097 457h1v1h-1zM1098 457h1v1h-1zM1099 457h1v1h-1zM1100 457h1v1h-1zM1101 456h1v1h-1zM1102 456h1v1h-1zM1103 456h1v1h-1zM1104 456h1v1h-1zM1105 457h1v1h-1zM1106 457h1v1h-1zM1107 457h1v1h-1zM1108 457h1v1h-1zM1109 457h1v1h-1zM1110 457h1v1h-1zM1111 457h1v1h-1zM1112 457h1v1h-1zM1113 457h1v1h-1zM1114 457h1v1h-1zM1115 457h1v1h-1zM1116 457h1v1h-1zM1117 457h1v1h-1zM1118 457h1v1h-1zM1119 457h1v1h-1zM1120 457h1v1h-1zM1121 457h1v1h-1zM1122 457h1v1h-1zM1123 457h1v1h-1zM1124 457h1v1h-1zM1125 457h1v1h-1zM1126 457h1v1h-1zM1127 456h1v1h-1zM1128 456h1v1h-1zM1129 456h1v1h-1zM1130 456h1v1h-1zM1131 457h1v1h-1zM1132 457h1v1h-1zM1133 457h1v1h-1zM1134 457h1v1h-1zM1135 457h1v1h-1zM1136 457h1v1h-1zM1137 457h1v1h-1zM1138 457h1v1h-1zM1139 457h1v1h-1zM1140 457h1v1h-1zM1141 457h1v1h-1zM1142 457h1v1h-1zM1143 457h1v1h-1zM1144 457h1v1h-1zM1145 457h1v1h-1zM1146 457h1v1h-1zM1147 457h1v1h-1zM1148 457h1v1h-1zM1149 457h1v1h-1zM1150 457h1v1h-1zM1151 457h1v1h-1zM1152 456h1v1h-1zM1153 456h1v1h-1zM1154 456h1v1h-1zM1155 456h1v1h-1zM1156 457h1v1h-1zM1157 457h1v1h-1zM1158 457h1v1h-1zM1159 457h1v1h-1zM1160 457h1v1h-1zM1161 457h1v1h-1zM1162 457h1v1h-1zM1163 457h1v1h-1zM1164 457h1v1h-1zM1165 457h1v1h-1zM1166 457h1v1h-1zM1167 457h1v1h-1zM1168 457h1v1h-1zM1169 457h1v1h-1zM1170 457h1v1h-1zM1171 457h1v1h-1zM1172 457h1v1h-1zM1173 457h1v1h-1zM1174 457h1v1h-1zM1175 457h1v1h-1zM1176 457h1v1h-1zM1177 457h1v1h-1zM1178 456h1v1h-1zM1179 456h1v1h-1zM1180 456h1v1h-1zM1181 456h1v1h-1zM1182 457h1v1h-1zM1183 457h1v1h-1zM1184 457h1v1h-1zM1185 457h1v1h-1zM1186 457h1v1h-1zM1187 457h1v1h-1zM1188 457h1v1h-1zM1189 457h1v1h-1zM1190 457h1v1h-1zM1191 457h1v1h-1zM1192 457h1v1h-1zM1193 457h1v1h-1zM1194 457h1v1h-1zM1195 457h1v1h-1zM1196 457h1v1h-1zM1197 457h1v1h-1zM1198 457h1v1h-1zM1199 457h1v1h-1zM1200 457h1v1h-1zM1201 457h1v1h-1zM1202 457h1v1h-1zM1203 456h1v1h-1zM1204 456h1v1h-1zM1205 456h1v1h-1zM1206 456h1v1h-1zM1207 457h1v1h-1zM1208 457h1v1h-1zM1209 457h1v1h-1zM1210 457h1v1h-1zM1211 457h1v1h-1zM1212 457h1v1h-1zM1213 457h1v1h-1zM1214 457h1v1h-1zM1215 457h1v1h-1zM1216 457h1v1h-1zM1217 457h1v1h-1zM1218 457h1v1h-1zM1219 457h1v1h-1zM1220 457h1v1h-1zM1221 457h1v1h-1zM1222 457h1v1h-1zM1223 457h1v1h-1zM1224 457h1v1h-1zM1225 457h1v1h-1zM1226 457h1v1h-1zM1227 457h1v1h-1zM1228 457h1v1h-1zM1229 456h1v1h-1zM1230 456h1v1h-1zM1231 456h1v1h-1zM1232 456h1v1h-1zM1233 457h1v1h-1zM1234 457h1v1h-1zM1235 457h1v1h-1zM1236 457h1v1h-1zM1237 457h1v1h-1zM1238 457h1v1h-1zM1239 457h1v1h-1zM1240 457h1v1h-1zM1241 457h1v1h-1zM1242 457h1v1h-1zM1243 457h1v1h-1zM1244 457h1v1h-1zM1245 457h1v1h-1zM1246 457h1v1h-1zM1247 457h1v1h-1zM1248 457h1v1h-1zM1249 457h1v1h-1zM1250 457h1v1h-1zM1251 457h1v1h-1zM1252 457h1v1h-1zM1253 457h1v1h-1zM1254 456h1v1h-1zM1255 456h1v1h-1zM1256 456h1v1h-1zM1257 456h1v1h-1zM1258 457h1v1h-1zM1259 457h1v1h-1zM1260 457h1v1h-1zM1261 457h1v1h-1z" fill="#00ff00"/>
</svg>
<div id="status" class="abs"><div class="abs" style="left:1277px;top:6px;width:1px;height:12px;background:#c8c4b4"></div><div class="abs" style="left:1278px;top:6px;width:2px;height:12px;background:#fff"></div><div class="abs" style="left:2px;top:6px">x = 3.73µs &nbsp;&nbsp; y = 9.43KV</div></div>
<div id="taskbar" class="abs">
 <div class="abs" style="left:0;top:0;width:99px;height:30px;border-radius:0 6px 6px 0 / 0 15px 15px 0;background:linear-gradient(#3a8a3a 0,#66b866 2px,#48a448 4px,#3a9c3a 8px,#3aa53a 18px,#339633 26px,#2a7a2a 30px);box-shadow:inset -3px 0 4px #267a26, inset 1px 0 0 #1a5a4a"></div>
 <svg class="abs" style="left:10px;top:6px" width="20" height="18" viewBox="0 0 20 18"><path d="M3 1Q6 0 9 1.5L8 8Q5 7 2 8Z" fill="#f25a1a"/><path d="M10 2Q13 3.5 18 2L17 9Q13 10 9 8.5Z" fill="#6cc020"/><path d="M2 9Q5 8 8 9.5L7 16Q4 15 1 16Z" fill="#3a8af0"/><path d="M9 9.5Q13 11 17 10L16 17Q12 18 8 16.5Z" fill="#f8c818"/></svg>
 <div class="abs" style="left:35px;top:5px;color:#fff;font-weight:bold;font-style:italic;font-size:18px;letter-spacing:-0.3px;text-shadow:1px 1px 1px #1a4a1a">Start</div>
 <div class="abs" style="left:109px;top:4px;width:158px;height:22px;border-radius:3px;background:linear-gradient(#4a8ef5,#3c80f0 40%,#3b7cee);border:1px solid #2c60d8;border-top-color:#6aa4fa;border-left-color:#5a96f6"></div>
 <svg class="abs" style="left:119px;top:8px" width="15" height="15" viewBox="0 0 15 15"><circle cx="7.5" cy="7.5" r="7" fill="#e8661a"/><path d="M7.5 0.5A7 7 0 0 1 14.5 7.5Q13 4 9 3.5Q6 3 4.5 5.5Q7 5 8 7Q6.5 9 4 8.5Q3 6 4.5 3Q2 5 2 8Q1 4 3.5 2Q5 0.5 7.5 0.5Z" fill="#2a6ac8"/><path d="M2.5 9Q4 13 8 13Q12 13 13.5 9.5Q12 14 7.5 14.3Q3 14 2.5 9Z" fill="#ffb020"/></svg>
 <div class="abs" style="left:138px;top:8px;color:#fff;font-size:11px">Andere Themen | Bas...</div>
 <div class="abs" style="left:268px;top:4px;width:160px;height:23px;border-radius:3px;background:#1e4fbe;border:1px solid #163c98;border-bottom-color:#2a5cc8;border-right-color:#2a5cc8;box-shadow:inset 1px 1px 1px #17409e"></div>
 <svg class="abs" style="left:279px;top:8px" width="16" height="16" viewBox="0 0 16 16"><rect width="16" height="16" fill="#c0c0c0"/><path d="M0 12.5L6.3 3H7.9L5.6 6L5.2 9.3L6.9 12.5Z" fill="#800000"/><path d="M9.1 3H15.8L9.5 12.5H8.2L10.3 8.8L10.4 5.2Z" fill="#800000"/></svg>
 <div class="abs" style="left:298px;top:9px;color:#fff;font-size:11px">LTspice IV - [Quentsc...</div>
 <div class="abs" style="left:1187px;top:0;width:93px;height:30px;border-left:1px solid #10307a;background:linear-gradient(#1060c8 0,#18b4f4 1px,#14a8f0 3px,#0f96e6 6px,#0f90e2 24px,#0c80d8 28px,#0a6ec8 30px)"></div>
 <div class="abs" style="left:1152px;top:7px;width:16px;height:16px;background:#3c70d4"></div>
 <div class="abs" style="left:1153px;top:9px;color:#fff;font-size:11px;letter-spacing:-0.8px">DE</div>
 <svg class="abs" style="left:1178px;top:6px" width="20" height="20" viewBox="0 0 20 20"><defs><radialGradient id="cg" cx="0.35" cy="0.3" r="0.8"><stop offset="0" stop-color="#bfe4ff"/><stop offset="0.5" stop-color="#3a9cf0"/><stop offset="1" stop-color="#1660d8"/></radialGradient></defs><circle cx="10" cy="10" r="8.6" fill="url(#cg)" stroke="#3a5a90" stroke-width="0.8"/><path d="M11.5 5.5L7.5 9.5L11.5 13.5" stroke="#fff" stroke-width="2.4" fill="none"/></svg>
 <svg class="abs" style="left:1199px;top:7px" width="15" height="17" viewBox="0 0 15 17"><path d="M1 2Q7 0 14 2V9Q12 14 7.5 16.5Q3 14 1 9Z" fill="#fff"/><path d="M2.2 3Q7.5 1.4 12.8 3V9Q11 13 7.5 15Q4 13 2.2 9Z" fill="#e00010"/><path d="M11 5.5Q9 4 7 4.8Q4.5 6 4.8 9Q5.5 12 8 12Q10.5 11.5 11 9V8H8V9.5H9" stroke="#fff" stroke-width="1.8" fill="none"/></svg>
 <svg class="abs" style="left:1216px;top:6px" width="17" height="17" viewBox="0 0 17 17"><rect x="1" y="4" width="9" height="7" fill="#1a3a7a" stroke="#c8d4e8" stroke-width="0.8"/><rect x="2.5" y="5.5" width="6" height="4" fill="#3a5aa0"/><path d="M2 14h8l-1-2H3z" fill="#c8c8e8"/><path d="M12 3Q13.5 5 12 7M14 1.5Q16.5 5 14 8.5" stroke="#d8d8e8" fill="none" stroke-width="1.2"/></svg>
 <div class="abs" style="left:1240px;top:9px;color:#fff;font-size:11px">19:22</div>
</div>
</body></html>
